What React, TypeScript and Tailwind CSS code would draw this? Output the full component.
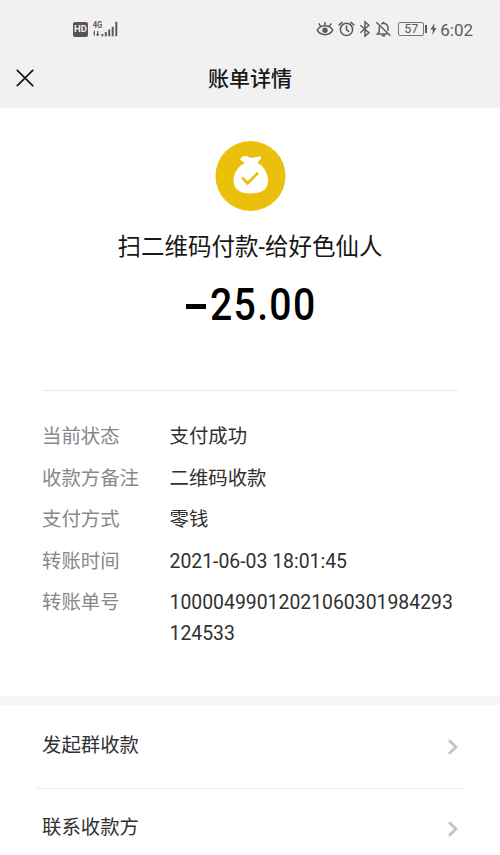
import type { ReactNode } from "react";

type DetailProps = {
    label: string;
    children: ReactNode;
};

const details = [
    { label: "当前状态", value: "支付成功" },
    { label: "收款方备注", value: "二维码收款" },
    { label: "支付方式", value: "零钱" },
    { label: "转账时间", value: "2021-06-03 18:01:45" },
    { label: "转账单号", value: "10000499012021060301984293124533" },
];

const StatusBar = () => {
    return (
        <div className="flex h-[58px] items-center pl-[73px] pr-[27px] text-[#5c5c5c]">
            <div className="flex h-[15px] w-[15px] items-center justify-center rounded-[2px] bg-[#555] text-[9.5px] font-bold leading-none text-[#f1f1f1]">
                HD
            </div>
            <svg className="ml-1" width="28" height="18" viewBox="92 20 28 18" fill="#5c5c5c">
                <text x="92.7" y="28.4" fontSize="9.5" fontWeight="700" textLength="9.5" lengthAdjust="spacingAndGlyphs">4G</text>
                <path d="M93 32.500l2-2.200v5.200h-1.300v-3zM97 31h1.300v3h1.200l-1.800 2.400-1.800-2.400H97z" />
                <path d="M101.400 34h2v2.300h-2zM104.800 32h2v4.300h-2zM108.200 29.500h2v6.800h-2zM111.700 26.700h2v9.600h-2zM115.300 21.800h2v14.500h-2z" />
            </svg>

            <div className="ml-auto flex items-center">
                <svg width="18" height="18" viewBox="0 0 18 18" fill="none" stroke="currentColor" strokeWidth="1.5" strokeLinecap="round">
                    <path d="M1.200 10.200C2.800 7.300 5.600 5.700 9 5.700s6.200 1.600 7.800 4.500c-1.600 2.900-4.400 4.500-7.800 4.500s-6.200-1.600-7.800-4.500z" />
                    <circle cx="9" cy="10.2" r="2.7" fill="currentColor" stroke="none" />
                    <path d="M9 5.500V2.600M4.600 6.300L3.100 3.900M13.400 6.300l1.500-2.400" />
                </svg>
                <svg className="ml-[4px]" width="17" height="18" viewBox="0 0 17 18" fill="none" stroke="currentColor" strokeWidth="1.6" strokeLinecap="round">
                    <circle cx="8.5" cy="9.4" r="6.1" />
                    <path d="M8.500 6v3.600l2.200 1.700M1.200 4.900l2.900-2.500M15.800 4.900l-2.900-2.500" />
                </svg>
                <svg className="ml-[4px]" width="12" height="18" viewBox="0 0 12 18" fill="none" stroke="currentColor" strokeWidth="1.5">
                    <path d="M1.300 5.200l8.600 7.600L6 16.200V1.800l3.900 3.400-8.600 7.600" />
                </svg>
                <svg className="ml-[4px]" width="17" height="18" viewBox="0 0 17 18" fill="none" stroke="currentColor" strokeWidth="1.5">
                    <path d="M6.200 4.200C8.900 2.100 13 4 13 7.900V11M4.200 6.400V11.800L2.400 13.900H12M8.500 3.400V1.700M1.300 2.300l14 13.500M6.800 15.800h3.400" />
                </svg>
                <div className="ml-[6px] flex h-[14px] w-[26px] items-center justify-center rounded-[2px] border border-[#777] text-[12.5px] leading-none">
                    57
                </div>
                <div className="ml-px h-[8px] w-[2px] bg-[#5c5c5c]" />
                <svg className="ml-[3px]" width="7" height="12" viewBox="0 0 7 12" fill="currentColor">
                    <path d="M4.600 0L.5 6.600h2.400L2.300 12 6.500 5H4z" />
                </svg>
                <span className="ml-[3px] pt-[2px] text-[17px] leading-none">6:02</span>
            </div>
        </div>
    );
};

const Detail = ({ label, children }: DetailProps) => {
    return (
        <div className="flex leading-[31px]">
            <span className="w-[127.5px] shrink-0 text-[#888]">{label}</span>
            <span className="break-all text-[#303030]">{children}</span>
        </div>
    );
};

const ActionRow = ({ label }: { label: string }) => {
    return (
        <button type="button" className="flex w-full items-center justify-between pl-[6px] pr-[5px] text-[#303030]">
            <span className="leading-[30px]">{label}</span>
            <svg className="mt-[3px]" width="12" height="18" viewBox="0 0 12 18" fill="none" stroke="#c4c4c4" strokeWidth="2.8">
                <path d="M2 2.200L9 9l-7 6.800" />
            </svg>
        </button>
    );
};

export default function App() {
    return (
        <div className="h-[855px] w-[500px] overflow-hidden bg-white font-[Roboto,'Noto_Sans_CJK_SC',sans-serif] text-[19.4px]">
            <header className="h-[108px] bg-[#f1f1f1]">
                <StatusBar />
                <div className="grid h-10 grid-cols-[1fr_auto_1fr] items-center">
                    <svg className="ml-4" width="18" height="18" viewBox="0 0 18 18" fill="none" stroke="#181818" strokeWidth="1.7">
                        <path d="M.8.8l16.400 16.400M17.200.8L.8 17.200" />
                    </svg>
                    <h1 className="pt-[2px] text-[21px] font-medium leading-[38px] text-[#181818]">账单详情</h1>
                </div>
            </header>

            <main>
                <section className="flex flex-col items-center pt-[33px]">
                    <svg width="71" height="71" viewBox="0 0 71 71">
                        <circle cx="35.5" cy="35" r="35" fill="#ebc00c" />
                        <path
                            fill="#fff"
                            d="M25.600 17.400c2.500-3.100 5.400-2.700 8.600-1.200 3.700 1.500 7.500-.5 10.600-.7 1.600-.1 1.800 1 .9 2.300l-3.300 4.300c6.300 2.700 10.600 10.300 10.600 17.400 0 9.100-6.100 12.900-17.200 12.900S18.600 48.600 18.600 39.500c0-7.200 4.300-14.300 11.400-17.400l-4-2.900c-.9-.6-1-1.200-.4-1.800z"
                        />
                        <path d="M27.200 36.800l5.300 5.400 10.700-10.500" fill="none" stroke="#ebc00c" strokeWidth="2.8" />
                    </svg>
                    <p className="mt-[17px] text-[23.5px] leading-9 text-[#181818]">扫二维码付款-给好色仙人</p>
                    <div className="mt-[16px] flex h-[50px] items-center text-[43.5px] font-medium leading-[50px] text-black">
                        <span className="ml-1 h-[5px] w-5 bg-black" />
                        <span className="-ml-[2px] -mr-[4px] inline-block scale-x-[.9] tracking-[1.5px]">25.00</span>
                    </div>
                </section>

                <section className="mx-[42px] mt-[59px] border-t border-[#e8e8e8] pt-[30px]">
                    <div className="flex flex-col gap-[10.6px]">
                        {details.map((item) => (
                            <Detail key={item.label} label={item.label}>
                                {item.value}
                            </Detail>
                        ))}
                    </div>
                </section>

                <section className="mt-[47px] border-t-[9px] border-[#f6f6f6] px-9">
                    <div className="flex h-[84px] items-center border-b border-[#ececec] pb-[2px]">
                        <ActionRow label="发起群收款" />
                    </div>
                    <div className="flex h-[77px] items-center">
                        <ActionRow label="联系收款方" />
                    </div>
                </section>
            </main>
        </div>
    );
}
